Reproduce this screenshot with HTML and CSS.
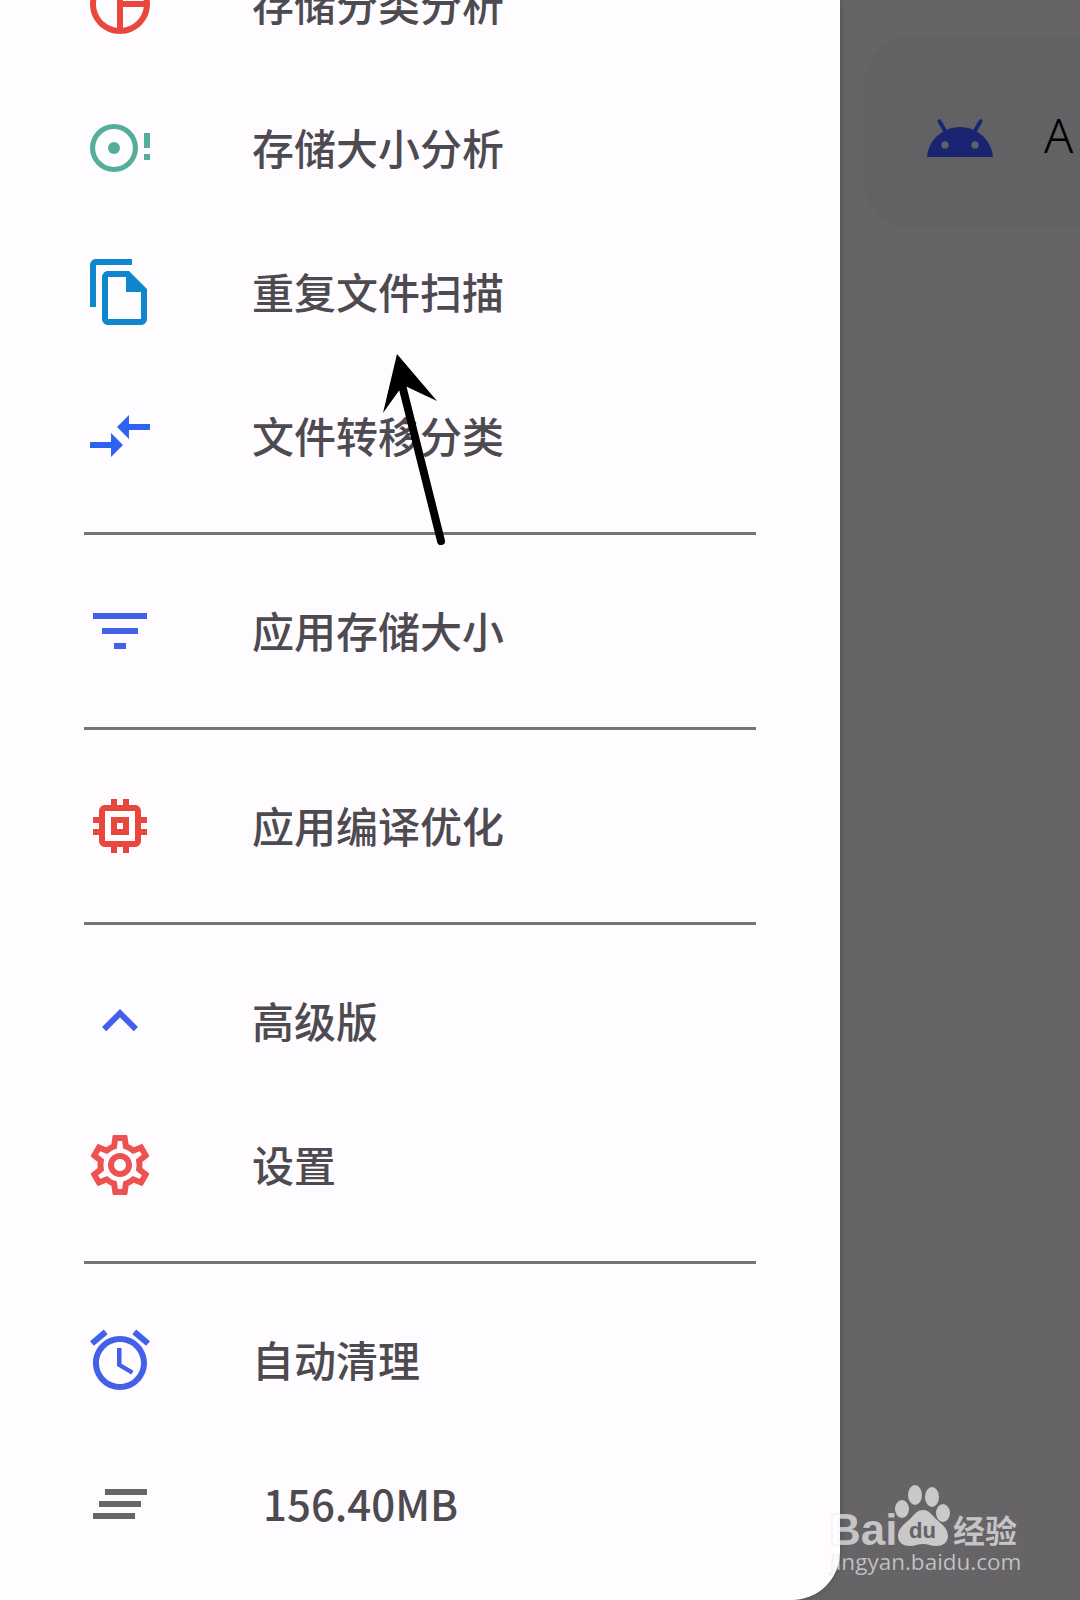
FILE: index.html
```html
<!DOCTYPE html>
<html lang="zh-CN">
<head>
<meta charset="utf-8" />
<title>存储分析</title>
<link rel="stylesheet" href="styles.css">
</head>
<body>
<div class="screen">
    <div class="drawer">
        <ul class="menu">
            <li class="row"><svg class="icon red" viewBox="0 0 24 24"><path d="M12 2C6.49 2 2 6.49 2 12s4.49 10 10 10 10-4.49 10-10S17.51 2 12 2zm1 2.07c3.61.45 6.48 3.33 6.93 6.93H13V4.07zM4 12c0-4.06 3.07-7.44 7-7.93v15.87c-3.93-.5-7-3.88-7-7.94zm9 7.93V13h6.93c-.45 3.61-3.32 6.48-6.93 6.93z"/></svg><span>存储分类分析</span></li>
            <li class="row"><svg class="icon teal" viewBox="0 0 24 24"><path d="M10 4a8 8 0 1 0 0 16 8 8 0 0 0 0-16zm0 1.7a6.3 6.3 0 1 1 0 12.6 6.3 6.3 0 0 1 0-12.6z"/><circle cx="10" cy="12" r="2"/><path d="M20 7h2v5h-2zM20 14h2v2h-2z"/></svg><span>存储大小分析</span></li>
            <li class="row"><svg class="icon sky" viewBox="0 0 24 24"><path d="M16 1H4c-1.1 0-2 .9-2 2v14h2V3h12V1zm-1 4H8c-1.1 0-1.99.9-1.99 2L6 21c0 1.1.89 2 1.99 2H19c1.1 0 2-.9 2-2V11l-6-6zM8 21V7h6v5h5v9H8z"/></svg><span>重复文件扫描</span></li>
            <li class="row"><svg class="icon blue2" viewBox="0 0 24 24"><path d="M9.01 14H2v2h7.01v3L13 15l-3.99-4v3zm5.98-1v-3H22V8h-7.01V5L11 9l3.99 4z"/></svg><span>文件转移分类</span></li>
            <li class="sep"></li>
            <li class="row"><svg class="icon blue" viewBox="0 0 24 24"><path d="M10 18h4v-2h-4v2zM3 6v2h18V6H3zm3 7h12v-2H6v2z"/></svg><span>应用存储大小</span></li>
            <li class="sep"></li>
            <li class="row"><svg class="icon red" viewBox="0 0 24 24"><path d="M15 9H9v6h6V9zm-2 4h-2v-2h2v2zm8-2V9h-2V7c0-1.1-.9-2-2-2h-2V3h-2v2h-2V3H9v2H7c-1.1 0-2 .9-2 2v2H3v2h2v2H3v2h2v2c0 1.1.9 2 2 2h2v2h2v-2h2v2h2v-2h2c1.1 0 2-.9 2-2v-2h2v-2h-2v-2h2zm-4 6H7V7h10v10z"/></svg><span>应用编译优化</span></li>
            <li class="sep"></li>
            <li class="row"><svg class="icon blue" viewBox="0 0 24 24"><path d="M12 8l-6 6 1.41 1.41L12 10.83l4.59 4.58L18 14z"/></svg><span>高级版</span></li>
            <li class="row"><svg class="icon coral" viewBox="0 0 24 24"><path d="M19.43 12.98c.04-.32.07-.64.07-.98 0-.34-.03-.66-.07-.98l2.11-1.65c.19-.15.24-.42.12-.64l-2-3.46c-.09-.16-.26-.25-.44-.25-.06 0-.12.01-.17.03l-2.49 1c-.52-.4-1.08-.73-1.69-.98l-.38-2.65C14.46 2.18 14.25 2 14 2h-4c-.25 0-.46.18-.49.42l-.38 2.65c-.61.25-1.17.59-1.69.98l-2.49-1c-.06-.02-.12-.03-.18-.03-.17 0-.34.09-.43.25l-2 3.46c-.13.22-.07.49.12.64l2.11 1.65c-.04.32-.07.65-.07.98 0 .33.03.66.07.98l-2.11 1.65c-.19.15-.24.42-.12.64l2 3.46c.09.16.26.25.44.25.06 0 .12-.01.17-.03l2.49-1c.52.4 1.08.73 1.69.98l.38 2.65c.03.24.24.42.49.42h4c.25 0 .46-.18.49-.42l.38-2.65c.61-.25 1.17-.59 1.69-.98l2.49 1c.06.02.12.03.18.03.17 0 .34-.09.43-.25l2-3.46c.12-.22.07-.49-.12-.64l-2.11-1.65zm-1.98-1.71c.04.31.05.52.05.73 0 .21-.02.43-.05.73l-.14 1.13.89.7 1.08.84-.7 1.21-1.27-.51-1.04-.42-.9.68c-.43.32-.84.56-1.25.73l-1.06.43-.16 1.13-.2 1.35h-1.4l-.19-1.35-.16-1.13-1.06-.43c-.43-.18-.83-.41-1.23-.71l-.91-.7-1.06.43-1.27.51-.7-1.21 1.08-.84.89-.7-.14-1.13c-.03-.31-.05-.54-.05-.74s.02-.43.05-.73l.14-1.13-.89-.7-1.08-.84.7-1.21 1.27.51 1.04.42.9-.68c.43-.32.84-.56 1.25-.73l1.06-.43.16-1.13.2-1.35h1.39l.19 1.35.16 1.13 1.06.43c.43.18.83.41 1.23.71l.91.7 1.06-.43 1.27-.51.7 1.21-1.07.85-.89.7.14 1.13zM12 8c-2.21 0-4 1.79-4 4s1.79 4 4 4 4-1.79 4-4-1.79-4-4-4zm0 6c-1.1 0-2-.9-2-2s.9-2 2-2 2 .9 2 2-.9 2-2 2z"/></svg><span>设置</span></li>
            <li class="sep"></li>
            <li class="row"><svg class="icon blue" viewBox="0 0 24 24"><path d="M22 5.72l-4.6-3.86-1.29 1.53 4.6 3.86L22 5.72zM7.88 3.39L6.6 1.86 2 5.71l1.29 1.53 4.59-3.85zM12.5 8H11v6l4.75 2.85.75-1.23-4-2.37V8zM12 4c-4.97 0-9 4.03-9 9s4.03 9 9 9c4.97 0 9-4.03 9-9s-4.03-9-9-9zm0 16c-3.87 0-7-3.13-7-7s3.13-7 7-7 7 3.13 7 7-3.13 7-7 7z"/></svg><span>自动清理</span></li>
            <li class="row"><svg class="icon grey" viewBox="0 0 24 24"><path d="M7 7h14v2H7zM5 11h14v2H5zM3 15h14v2H3z"/></svg><span class="size">156.40MB</span></li>
        </ul>
    </div>
    <div class="behind">
        <div class="app_card">
            <svg class="icon navy" viewBox="0 0 24 24"><path d="M17.6 9.48l1.84-3.18c.16-.31.04-.69-.26-.85-.29-.15-.65-.06-.83.22l-1.88 3.24c-2.86-1.21-6.08-1.21-8.94 0L5.65 5.67c-.19-.29-.58-.38-.87-.2-.28.18-.37.54-.22.83L6.4 9.48C3.3 11.25 1.28 14.44 1 18h22c-.28-3.56-2.3-6.75-5.4-8.52zM7 15.25c-.69 0-1.25-.56-1.25-1.25s.56-1.25 1.25-1.25 1.25.56 1.25 1.25-.56 1.25-1.25 1.25zm10 0c-.69 0-1.25-.56-1.25-1.25s.56-1.25 1.25-1.25 1.25.56 1.25 1.25-.56 1.25-1.25 1.25z"/></svg>
            <span class="app_name">A</span>
        </div>
    </div>

    <!-- arrow drawn on top of the screenshot -->
    <svg class="arrow" viewBox="0 0 1080 1600">
        <path class="arrow_line" d="M402 385L441 541"/>
        <path class="arrow_head" d="M397 354L437 401L403 385L383 413z"/>
    </svg>

    <!-- watermark -->
    <svg class="mark" viewBox="0 0 1080 1600">
        <ellipse cx="915" cy="1495" rx="7" ry="10"/>
        <ellipse cx="932" cy="1497" rx="7" ry="10"/>
        <ellipse cx="902" cy="1509" rx="7" ry="9"/>
        <ellipse cx="943" cy="1513" rx="7" ry="9"/>
        <path d="M923 1510c6 0 9 5 13 9 6 5 12 10 12 17 0 7-6 10-12 10-5 0-8-2-13-2s-8 2-13 2c-6 0-12-3-12-10 0-7 6-12 12-17 4-4 7-9 13-9z"/>
        <text class="mark_du" x="909" y="1538">du</text>
        <text class="mark_bai" x="829" y="1545">Bai</text>
        <text class="mark_cn" x="953" y="1543">经验</text>
        <text class="mark_url" x="830" y="1570">jingyan.baidu.com</text>
    </svg>
</div>
</body>
</html>
```

FILE: styles.css
```css
* { box-sizing: border-box; }
body { margin: 0; background: #666467; }
ul { padding: 0; margin: 0; }
li { list-style: none; }

.screen { width: 1080px; height: 1600px; overflow: hidden; position: relative; display: flex; background: #666467; }

.drawer { width: 840px; height: 1600px; flex: none; overflow: hidden; background: #fefcff; border-bottom-right-radius: 48px; box-shadow: 0 0 6px rgba(0,0,0,.25); }
.menu { margin-top: -68px; }
.row { height: 144px; display: flex; align-items: center; gap: 96px; padding-left: 84px; font: 500 42px "Noto Sans CJK SC", "Noto Sans", sans-serif; color: #4d4a50; }
.row span { margin-bottom: 4px; }
.row .size { padding-left: 11px; }
.sep { height: 3px; margin: 24px 0 24px 84px; width: 672px; background: #767477; }

.icon { width: 72px; height: 72px; flex: none; display: block; }
.red { fill: #e8483c; }
.coral { fill: #ec5350; }
.teal { fill: #55ad9c; }
.sky { fill: #0f87cc; }
.blue { fill: #4361e8; }
.blue2 { fill: #2f62ee; }
.grey { fill: #666; }
.navy { fill: #1a2472; margin-top: 12px; }

.behind { flex: 1; padding: 37px 0 0 24px; }
.app_card { height: 192px; width: 300px; display: flex; align-items: center; gap: 48px; padding-left: 60px; background: #626163; border-radius: 48px 0 0 48px; }
.app_name { font: 300 48px "Noto Sans", sans-serif; color: #000; margin-top: 2px; }

.arrow, .mark { position: absolute; left: 0; top: 0; width: 1080px; height: 1600px; pointer-events: none; }
.arrow_line { fill: none; stroke: #000; stroke-width: 8; stroke-linecap: round; }
.arrow_head { fill: #000; }

.mark { fill: rgba(255,255,255,.65); }
.mark text { stroke: rgba(0,0,0,.08); stroke-width: 1; }
.mark_du { font: bold 22px "Liberation Sans", sans-serif; fill: #656366; }
.mark_bai { font: bold 44px "Liberation Sans", sans-serif; }
.mark_cn { font: bold 32px "Noto Sans CJK SC", sans-serif; }
.mark_url { font: 22.5px "Open Sans", sans-serif; }
```
